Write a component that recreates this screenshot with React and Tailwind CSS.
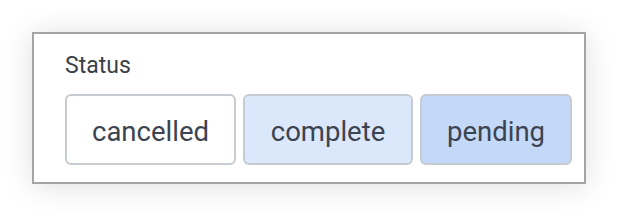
import React from 'react';

const options = [
    { label: 'cancelled', cls: 'bg-white w-[171px]' },
    { label: 'complete', cls: 'bg-[#dbe8fb] w-[170px]' },
    { label: 'pending', cls: 'bg-[#c4d9f8] w-[152px]' },
];

export default function App() {
    return (
        <div className="min-h-[216px] bg-white pt-[32px] pl-[32px] font-['Roboto',sans-serif]">
            <div className="w-[554px] border-2 border-[#a3a3a8] bg-white pl-[31px] pt-[18px] pb-[17px] shadow-[0_2px_28px_rgba(0,0,0,0.13)]">
                <div className="text-[23px] leading-[28px] text-[#3a3f47] mb-[14px]">Status</div>
                <div className="flex gap-[7px]">
                    {options.map((o) => (
                        <button
                            key={o.label}
                            className={`${o.cls} h-[71px] rounded-md border-2 border-[#c6cad1] pt-[4px] text-center text-[27.5px] leading-[28px] text-[#3c4350]`}
                        >
                            {o.label}
                        </button>
                    ))}
                </div>
            </div>
        </div>
    );
}
